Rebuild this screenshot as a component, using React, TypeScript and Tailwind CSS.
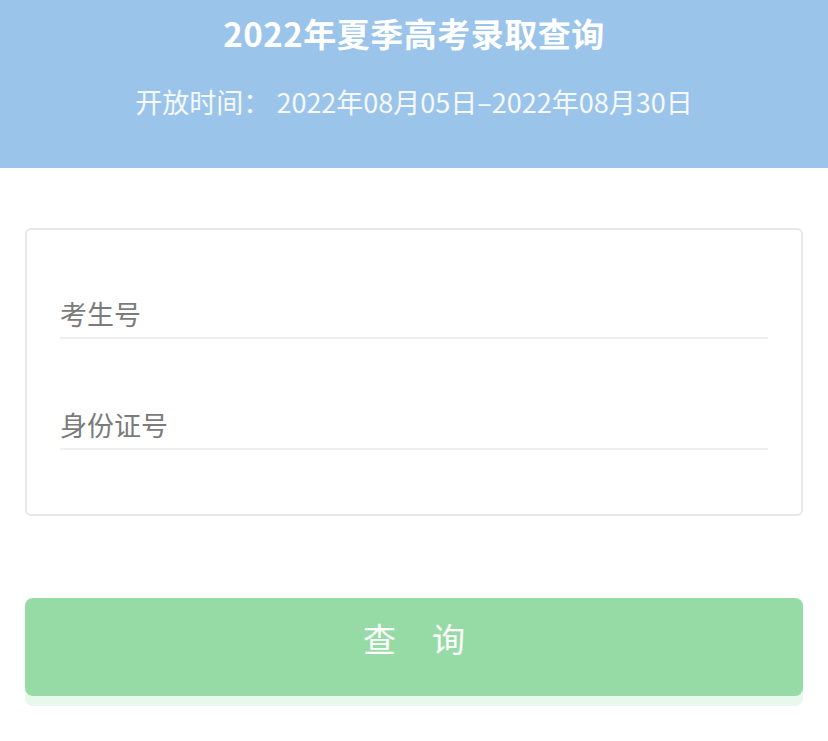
const FONT = { fontFamily: '"Noto Sans CJK SC", "Noto Sans", sans-serif' };

function Field({ label }: { label: string }) {
  return (
    <div className="flex h-[111px] items-end">
      <div className="w-full border-b-2 border-[#f0f0f0] pb-[3px] text-[27px] leading-[40px] text-[#7b7b7b]">
        {label}
      </div>
    </div>
  );
}

export default function App() {
  return (
    <div className="min-h-[741px] w-[828px] bg-white" style={FONT}>
      <header className="flex h-[168px] flex-col items-center bg-[#9bc4ea] pt-[13px] text-white">
        <h1 className="text-[33px] font-bold leading-[40px] tracking-[0.5px]">2022年夏季高考录取查询</h1>
        <p className="mt-[31px] whitespace-pre text-[27px] leading-[36px] text-white/90">
          开放时间： 2022年08月05日–2022年08月30日
        </p>
      </header>

      <div className="mx-[25px] mt-[60px] rounded-[6px] border-2 border-[#e8e8e8] px-[33px] pb-[64px]">
        <div className="-mt-[2px]">
          <Field label="考生号" />
          <Field label="身份证号" />
        </div>
      </div>

      <button className="mx-[25px] mt-[82px] flex h-[98px] w-[778px] items-center justify-center rounded-[8px] bg-[#96dba5] pb-[16px] text-[33px] tracking-[36px] indent-[36px] text-white shadow-[0_10px_0_#e9f8ed]">
        查询
      </button>
    </div>
  );
}
